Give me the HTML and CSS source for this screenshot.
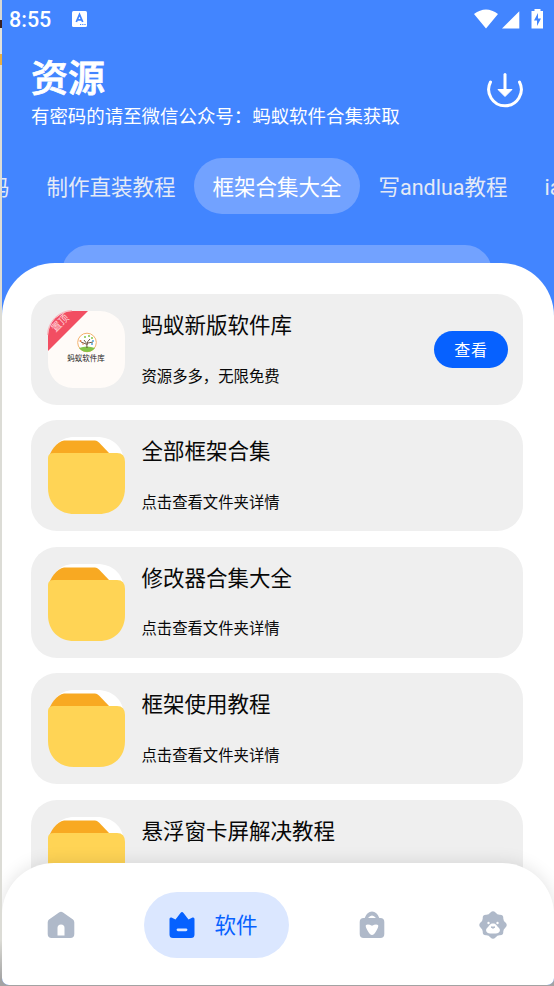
FILE: index.html
```
<!DOCTYPE html>
<html lang="zh-CN">
<head>
<meta charset="utf-8">
<title>资源</title>
<link rel="stylesheet" href="styles.css">
</head>
<body>
<svg width="0" height="0" class="defs">
  <symbol id="folder" viewBox="0 0 78 78">
    <path fill="#fff" d="M4 24C5 8 15 1 28 1h22c15 0 26 9 27 25v12H4z"/>
    <path fill="#f8a922" d="M1 25C3 14 10 6 17 4.500h31q2 0 4 2L63 18v12H1z"/>
    <path fill="#ffd455" d="M1 22q0-5 6-5h63q8 0 8 9v26c0 16-11 26-26 26H27C12 78 1 68 1 52z"/>
  </symbol>
</svg>
<div class="phone">
  <header class="status">
    <span class="time">8:55</span>
    <svg class="ime" viewBox="0 0 15 16"><rect width="15" height="16" rx="1.500" fill="#fff"/><path d="M4.300 11 7.500 3.500l3.200 7.500M5.400 8.800h4.200" fill="none" stroke="#4285ff" stroke-width="1.800"/><path d="M8 13.500h1.200M10.200 13.500h1.200M12.400 13.500h1.200" stroke="#4285ff" stroke-width="1.200"/></svg>
    <svg class="signals" viewBox="0 0 70 22"><path fill="#fff" d="M0 6Q12-3 24 6L12 20.500zM28 20.500 45.300 3.300V20.500zM58 3h2.500V1h6v2H69v17.500H57.500V3z"/><path fill="#4285ff" d="m64 5-4 7.500h3V18l4-7.500h-3z"/></svg>
  </header>
  <div class="heading">
    <div>
      <h1>资源</h1>
      <p>有密码的请至微信公众号：蚂蚁软件合集获取</p>
    </div>
    <svg class="download" viewBox="0 0 36 36" fill="none"><path d="M3.500 10A16.300 16.300 0 1 0 32.500 10" stroke="#fff" stroke-width="3" stroke-linecap="round"/><path d="M18 2.500V19" stroke="#fff" stroke-width="3" stroke-linecap="round"/><path d="M11 17.500h14L18 24.500z" fill="#fff" stroke="#fff" stroke-linejoin="round"/></svg>
  </div>
  <nav class="tabs">
    <span class="tab">源码</span><span class="tab">制作直装教程</span><span class="tab active">框架合集大全</span><span class="tab">写andlua教程</span><span class="tab">iapp</span>
  </nav>
  <div class="peek"></div>
  <main class="sheet">
    <article class="card">
      <svg class="thumb" viewBox="0 0 78 78">
        <clipPath id="tile"><rect x="1" y="1" width="77" height="77" rx="25"/></clipPath>
        <g clip-path="url(#tile)"><rect width="78" height="78" fill="#fffbf8"/><path fill="#f24e62" d="M0 0h42L0 42z"/></g>
        <path d="M.5 25A25 25 0 0 1 25 .5" fill="none" stroke="#f7b6bd"/>
        <text class="ribbon" x="13" y="16.500" transform="rotate(-45 13 13)">置顶</text>
        <circle cx="40" cy="32.500" r="9.300" fill="#fff" stroke="#f4b26d"/>
        <path fill="#83c447" d="M32 38q8-3 16 0-3 4-8 4t-8-4z"/>
        <path d="M40 38q1-5-3-8m3 5q0-4 3-6m-4 5-5-2m7 1 5-1" fill="none" stroke="#60452f" stroke-width=".9"/>
        <g fill="#83c447"><circle cx="38" cy="27" r="1"/><circle cx="42" cy="26" r="1"/><circle cx="45" cy="28" r="1"/></g><g fill="#e9793f"><circle cx="33.500" cy="31" r="1"/><circle cx="36" cy="34" r=".8"/></g><g fill="#55a9dc"><circle cx="46" cy="31" r="1"/><circle cx="45" cy="34" r="1"/></g>
        <text class="brand" x="39" y="51">蚂蚁软件库</text>
      </svg>
      <div class="copy"><h2>蚂蚁新版软件库</h2><p>资源多多，无限免费</p></div>
      <button class="view">查看</button>
    </article>
    <article class="card"><svg class="thumb"><use href="#folder"/></svg><div class="copy"><h2>全部框架合集</h2><p>点击查看文件夹详情</p></div></article>
    <article class="card"><svg class="thumb"><use href="#folder"/></svg><div class="copy"><h2>修改器合集大全</h2><p>点击查看文件夹详情</p></div></article>
    <article class="card"><svg class="thumb"><use href="#folder"/></svg><div class="copy"><h2>框架使用教程</h2><p>点击查看文件夹详情</p></div></article>
    <article class="card"><svg class="thumb"><use href="#folder"/></svg><div class="copy"><h2>悬浮窗卡屏解决教程</h2><p>点击查看文件夹详情</p></div></article>
  </main>
  <footer class="dock">
    <svg class="icon home" viewBox="0 0 28 28"><path fill="#afb9c9" d="M12 1.500q2-1.500 4 0l10 7q1.300 1 1.300 3V23q0 4-4 4H4.700q-4 0-4-4V11.500q0-2 1.300-3z"/><path fill="#fff" d="M10.500 24.500V17q0-3.500 3.500-3.500t3.500 3.500v7.500z"/></svg>
    <div class="current">
      <svg class="icon" viewBox="0 0 28 28"><path fill="#0661ff" d="M1.500 8q0-2 2-1.500l4 2 5-6.500q1.500-2 3 0l5 6.500 4-2q2-.5 2 1.500v15.500q0 3.500-3.500 3.500H5q-3.500 0-3.500-3.500z"/><path stroke="#dbe7ff" stroke-width="2.800" stroke-linecap="round" d="M10 18.800h8"/></svg>
      <span>软件</span>
    </div>
    <svg class="icon bag" viewBox="0 0 28 28"><path fill="#afb9c9" d="M1.700 11q0-4 4-4h1Q9 .5 14 .5T21.300 7h1q4 0 4 4v12q0 4-4 4H5.700q-4 0-4-4z"/><path fill="#fff" d="M10 7q4-5 8 0zM8 14q2-1.500 6 .8 4-2.300 6-.8 1 1-1.500 5.500T14 24q-2 0-4.500-4.500T8 14z"/></svg>
    <svg class="icon bear" viewBox="0 0 28 28"><path fill="#afb9c9" d="M11.500 1.500q2.500-2.500 5 0 2 2.500 4.500 2.200 3.300 0 3.300 3.300-.3 2.500 2.200 4.500 2.500 2.500 0 5-2.500 2-2.200 4.500 0 3.300-3.300 3.300-2.500-.3-4.500 2.200-2.500 2.500-5 0-2-2.500-4.500-2.200-3.300 0-3.300-3.300.3-2.500-2.200-4.500-2.500-2.500 0-5 2.500-2 2.200-4.500 0-3.300 3.300-3.300 2.500.3 4.500-2.200z"/><path fill="#fff" d="M14 12.500c3 0 3.500 2 5 3.500 4 3 1 6.500-2 6.500h-6c-3 0-6-3.500-2-6.500 1.500-1.500 2-3.500 5-3.500z"/><circle cx="9.500" cy="12" r="1.200" fill="#fff"/><circle cx="18.500" cy="12" r="1.200" fill="#fff"/><path d="M12 16q2 2.500 4 0z" fill="#afb9c9" stroke="#afb9c9"/></svg>
  </footer>
</div>
</body>
</html>
```
FILE: styles.css
```
* { box-sizing: border-box; margin: 0; padding: 0; }
body {
  width: 554px;
  height: 986px;
  overflow: hidden;
  padding-left: 2px;
  font-family: Roboto, "Noto Sans CJK SC", sans-serif;
  background: linear-gradient(#d8d8d4 0 20px, #3a2020 20px 28px, #e2e2dc 28px 54px, #eab043 54px 65px, #dcdcd6 65px 940px, #a3a3a3 980px);
}
svg { display: block; flex: none; }
.defs { position: absolute; }
.phone {
  width: 552px;
  height: 985px;
  overflow: hidden;
  display: flex;
  flex-direction: column;
  color: #fff;
  background: #4285ff;
  border-radius: 0 0 7px 7px;
}
.status { height: 40px; flex: none; display: flex; align-items: center; padding: 0 10px 3px 7px; }
.time { width: 62px; font-size: 21.5px; font-weight: 500; line-height: 40px; padding-top: 2px; }
.ime { width: 15px; height: 16px; margin-left: 1px; }
.signals { width: 70px; height: 22px; margin-left: auto; }
.heading { height: 118px; flex: none; display: flex; justify-content: space-between; padding: 20px 31px 0 29px; }
h1 { font-size: 37px; font-weight: 500; line-height: 40px; -webkit-text-stroke: .8px #fff; }
.heading p { font-size: 18.45px; line-height: 26px; margin-top: 4px; white-space: nowrap; }
.download { width: 36px; height: 36px; margin-top: 12px; }
.tabs { height: 56px; flex: none; display: flex; justify-content: center; margin: 0 -98px 0 -102px; }
.tab { flex: none; padding: 0 18.500px; line-height: 59px; font-size: 21.5px; color: #e4eaf6; white-space: nowrap; }
.tab.active { border-radius: 28px; color: #fff; background: #72a2ff; }
.peek { height: 55px; flex: none; margin: 31px 62px -37px 60px; border-radius: 27px; background: #72a2ff; }
.sheet {
  z-index: 1;
  height: 660px;
  flex: none;
  overflow: hidden;
  display: flex;
  flex-direction: column;
  gap: 15.400px;
  margin-bottom: -60px;
  padding: 31px 31px 0 29px;
  border-radius: 53px 53px 0 0;
  color: #080808;
  background: #fff;
}
.card { height: 111px; flex: none; display: flex; border-radius: 26px; padding: 16px 15px 0 16px; background: #efefef; }
.thumb { width: 78px; height: 78px; }
.ribbon { font-size: 10px; fill: #ffd3d8; text-anchor: middle; }
.brand { font-size: 7.500px; fill: #222; text-anchor: middle; }
.copy { flex: 1; padding: 1px 0 0 16.500px; white-space: nowrap; }
h2 { font-size: 21.5px; font-weight: 400; line-height: 30px; }
.copy p { font-size: 15.35px; line-height: 22px; margin-top: 24.500px; }
.view { width: 74px; height: 37px; margin-top: 21px; border: 0; border-radius: 19px; color: #fff; background: #0661ff; font: 16px/37px "Noto Sans CJK SC", sans-serif; letter-spacing: .8px; }
.dock {
  position: relative;
  z-index: 2;
  height: 122px;
  flex: none;
  display: flex;
  align-items: center;
  padding: 1px 0 0 45px;
  border-radius: 52px 52px 0 0;
  color: #0661ff;
  background: #fff;
  box-shadow: 0 0 18px rgba(0, 0, 0, .12);
}
.icon { width: 28px; height: 28px; }
.current { width: 145px; height: 66px; display: flex; align-items: center; gap: 18.500px; margin-left: 69px; padding-left: 24px; border-radius: 33px; background: #dbe7ff; font-size: 21.5px; }
.current span { padding-bottom: 3px; }
.bag { margin-left: 68.500px; }
.bear { margin-left: 93px; }
```
